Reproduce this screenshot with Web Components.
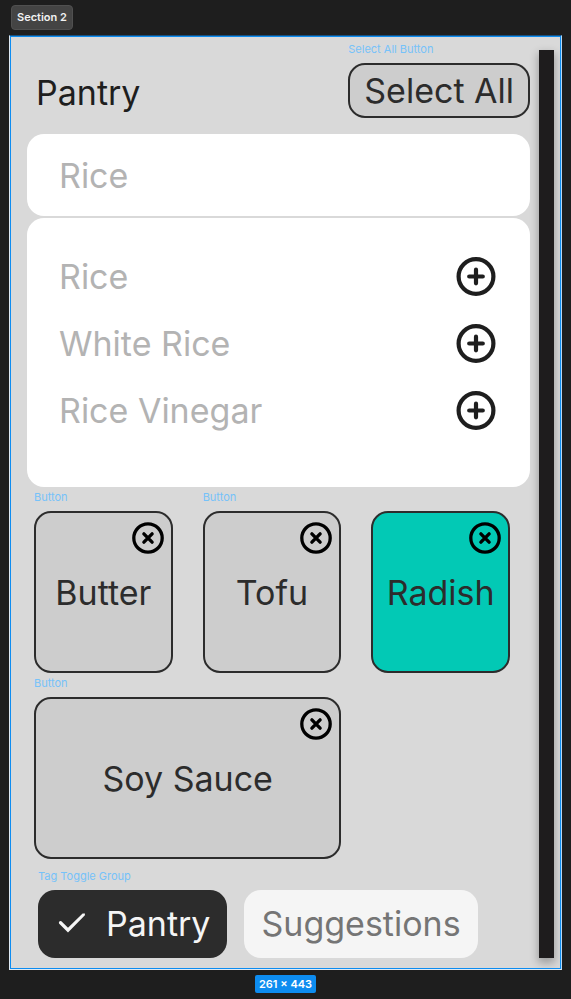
<!DOCTYPE html>
<html lang="en">
<head>
<meta charset="utf-8">
<title>Pantry</title>
<style>
  body {
    margin: 0;
    background: #1e1e1e;
    font-family: Inter, "Liberation Sans", sans-serif;
    font-optical-sizing: none;
    font-variation-settings: "opsz" 14;
  }
</style>
</head>
<body>
<design-canvas>
  <section-tag slot="tag">Section 2</section-tag>
  <pantry-header heading="Pantry">
    <layer-label>Select All Button</layer-label>
    <outline-button slot="action">Select All</outline-button>
  </pantry-header>
  <search-box label="Search ingredients" hint="Rice"></search-box>
  <result-list>
    <result-item>Rice</result-item>
    <result-item>White Rice</result-item>
    <result-item>Rice Vinegar</result-item>
  </result-list>
  <card-grid>
    <food-card layer="Button">Butter</food-card>
    <food-card layer="Button">Tofu</food-card>
    <food-card selected>Radish</food-card>
    <food-card layer="Button" wide>Soy Sauce</food-card>
  </card-grid>
  <tag-group layer="Tag Toggle Group">
    <tag-toggle selected>Pantry</tag-toggle>
    <tag-toggle>Suggestions</tag-toggle>
  </tag-group>
  <size-badge slot="size">261 × 443</size-badge>
</design-canvas>
<script>
const BASE = `
  *, *::before, *::after { box-sizing: border-box; }
  button, input { font: inherit; font-optical-sizing: inherit; font-variation-settings: inherit; color: inherit; letter-spacing: inherit; margin: 0; }
  button { cursor: pointer; }
  svg { display: block; }
`;
function define(name, render) {
  customElements.define(name, class extends HTMLElement {
    constructor() {
      super();
      this.attachShadow({ mode: "open" });
    }
    connectedCallback() {
      const t = document.createElement("template");
      t.innerHTML = "<style>" + BASE + "</style>" + render(this);
      this.shadowRoot.replaceChildren(t.content.cloneNode(true));
    }
  });
}

define("design-canvas", () => `
  <style>
    :host { display: flex; flex-direction: column; min-height: 100vh; padding: 5px 9px; box-sizing: border-box; }
    .top { padding: 0 2px 5px; display: flex; }
    .frame { display: flex; gap: 9px; border: 1px solid #dfeaf4; border-top-color: #17507f; border-right-color: #b9d8f2; outline: 1px solid #0d8cf0; outline-offset: -2px; background: #d9d9d9; padding: 6px 7px 11px 17px; overflow: hidden; }
    main { flex: 1; min-width: 0; }
    .bar { width: 15px; margin-top: 8px; background: #1e1c1d; box-shadow: 0 4px 8px 1px rgba(0,0,0,.28); }
    .bottom { display: flex; justify-content: center; padding-top: 5px; }
  </style>
  <div class="top"><slot name="tag"></slot></div>
  <div class="frame"><main><slot></slot></main><div class="bar"></div></div>
  <div class="bottom"><slot name="size"></slot></div>`);

define("section-tag", () => `
  <style>:host { display: block; border: 1px solid #505050; border-radius: 4px; background: #444; color: #f2f2f2; font-size: 11px; font-weight: 600; line-height: 23px; padding: 0 5px; }</style>
  <slot></slot>`);

define("size-badge", () => `
  <style>:host { display: block; border-radius: 2px; background: #0d8cf0; color: #fff; font-size: 11px; font-weight: 600; line-height: 18px; padding: 0 4px; }</style>
  <slot></slot>`);

define("layer-label", () => `
  <style>:host { display: block; color: #76c2f9; font-size: 11px; line-height: 14px; }</style>
  <slot></slot>`);

define("pantry-header", el => `
  <style>
    :host { display: flex; justify-content: space-between; align-items: flex-end; padding-left: 9px; margin-bottom: 16px; color: #1e1e1e; }
    h1 { margin: 0; font-size: 34px; font-weight: 400; line-height: 50px; }
    .action { display: flex; flex-direction: column; gap: 7px; }
  </style>
  <h1>${el.getAttribute("heading")}</h1>
  <div class="action"><slot></slot><slot name="action"></slot></div>`);

define("outline-button", () => `
  <style>
    :host { display: block; }
    button { display: block; width: 100%; border: 2px solid #2c2c2c; border-radius: 17px; background: #cdcdcd; color: #2c2c2c; font-size: 34px; line-height: 51px; padding: 0 14px; }
  </style>
  <button type="button"><slot></slot></button>`);

define("search-box", el => `
  <style>
    :host { display: block; margin-bottom: 2px; }
    input { display: block; width: 100%; border: 0; border-radius: 17px; background: #fff; color: #1e1e1e; font-size: 34px; line-height: 48px; height: 82px; padding: 0 32px; outline: none; }
    input::placeholder { color: #b3b3b3; opacity: 1; }
  </style>
  <input type="text" aria-label="${el.getAttribute("label")}" placeholder="${el.getAttribute("hint")}">`);

define("result-list", () => `
  <style>:host { display: flex; flex-direction: column; gap: 27px; border-radius: 17px; background: #fff; padding: 39px 34px 56px 32px; margin-bottom: 3px; }</style>
  <slot></slot>`);

define("result-item", el => `
  <style>
    :host { display: flex; justify-content: space-between; align-items: center; color: #b3b3b3; font-size: 34px; line-height: 40px; }
    button { border: 0; background: none; padding: 0; color: #1e1e1e; }
  </style>
  <span><slot></slot></span>
  <button type="button" aria-label="Add ${el.textContent}">
    <svg width="40" height="40" viewBox="0 0 40 40" fill="none" stroke="currentColor" stroke-width="4.2" stroke-linecap="round"><circle cx="20" cy="19.5" r="17.4"/><path d="M20 12.7v13.6M13.2 19.5h13.6"/></svg>
  </button>`);

define("card-grid", () => `
  <style>:host { display: grid; grid-template-columns: repeat(3, 1fr); gap: 3px 30px; align-items: end; padding: 0 20px 0 7px; margin-bottom: 10px; }</style>
  <slot></slot>`);

define("food-card", el => `
  <style>
    :host { display: flex; flex-direction: column; gap: 7px; }
    :host([wide]) { grid-column: span 2; }
    .card { position: relative; }
    .pick { display: block; width: 100%; border: 2px solid #2c2c2c; border-radius: 17px; background: #cdcdcd; color: #2c2c2c; font-size: 34px; line-height: 40px; padding: 60px 0 58px; white-space: nowrap; }
    :host([selected]) .pick { background: #02c9b5; }
    .remove { position: absolute; top: 11px; right: 9px; border: 0; background: none; padding: 0; color: #000; }
  </style>
  ${el.hasAttribute("layer") ? `<layer-label>${el.getAttribute("layer")}</layer-label>` : ""}
  <div class="card">
    <button class="pick" type="button" aria-pressed="${el.hasAttribute("selected")}"><slot></slot></button>
    <button class="remove" type="button" aria-label="Remove ${el.textContent}">
      <svg width="32" height="32" viewBox="0 0 32 32" fill="none" stroke="currentColor" stroke-linecap="round"><circle cx="16" cy="16" r="14.2" stroke-width="3.3"/><path d="M11.9 11.9l8.2 8.2M20.1 11.9l-8.2 8.2" stroke-width="3.4"/></svg>
    </button>
  </div>`);

define("tag-group", el => `
  <style>
    :host { display: flex; flex-direction: column; gap: 7px; padding-left: 11px; }
    .tags { display: flex; gap: 17px; }
  </style>
  <layer-label>${el.getAttribute("layer")}</layer-label>
  <div class="tags"><slot></slot></div>`);

define("tag-toggle", el => `
  <style>
    :host { display: block; }
    button { display: flex; align-items: center; gap: 17px; border: 0; border-radius: 17px; background: #f5f5f5; color: #757575; font-size: 34px; line-height: 34px; padding: 17px; }
    :host([selected]) button { background: #2c2c2c; color: #f5f5f5; }
  </style>
  <button type="button" aria-pressed="${el.hasAttribute("selected")}">
    ${el.hasAttribute("selected") ? `<svg width="34" height="34" viewBox="0 0 34 34" aria-hidden="true"><path d="M13 25.4L4 16.4q-.5-1.4.6-2.1t1.8 0L13 20.8 27.6 6.4l2.3.1v1.8z" fill="currentColor"/></svg>` : ""}
    <span><slot></slot></span>
  </button>`);
</script>
</body>
</html>
